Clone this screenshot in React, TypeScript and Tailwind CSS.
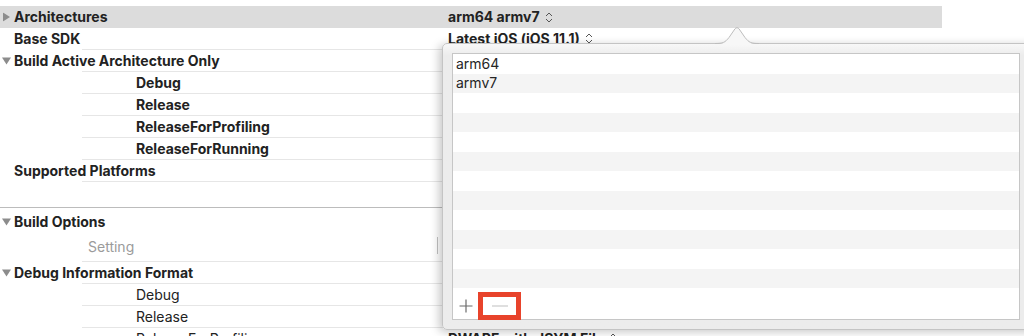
import React from 'react';

const font = { fontFamily: 'Inter, "Liberation Sans", sans-serif' };

function Updown() {
  return (
    <svg width="8" height="11" viewBox="0 0 8 11" className="ml-[5px] inline-block">
      <path d="M1 4 L4 1 L7 4 M1 7 L4 10 L7 7" fill="none" stroke="#555" strokeWidth="1" />
    </svg>
  );
}

function Triangle({ open }: { open: boolean }) {
  return (
    <svg width="9" height="9" viewBox="0 0 9 9" className="absolute left-[2px] top-1/2 -translate-y-1/2">
      {open ? <path d="M0 1 L9 1 L4.5 8 Z" fill="#8c8c8c" /> : <path d="M1 0 L8 4.5 L1 9 Z" fill="#8c8c8c" />}
    </svg>
  );
}

type Row = {
  label: string;
  indent?: boolean;
  bold?: boolean;
  tri?: 'open' | 'closed';
  value?: string;
  h?: string;
  line?: boolean;
};

function SettingRow({ row }: { row: Row }) {
  return (
    <div>
      <div className={`relative flex items-center ${row.h ?? 'h-[21px]'}`}>
        {row.tri && <Triangle open={row.tri === 'open'} />}
        <div className={`${row.indent ? 'pl-[136px]' : 'pl-[14px]'} w-[448px] shrink-0 ${row.bold === false ? 'font-normal' : 'font-bold'} text-[#222]`}>
          {row.label}
        </div>
        {row.value && (
          <div className="flex items-center font-bold text-[#222]">
            {row.value}
            <Updown />
          </div>
        )}
      </div>
      {row.line !== false && <div className="ml-[82px] h-px bg-[#e6e6e6]" />}
    </div>
  );
}

// values of the rows under the popover are hidden in the screenshot
const section1: Row[] = [
  { label: 'Base SDK', value: 'Latest iOS (iOS 11.1)' },
  { label: 'Build Active Architecture Only', tri: 'open' },
  { label: 'Debug', indent: true },
  { label: 'Release', indent: true },
  { label: 'ReleaseForProfiling', indent: true },
  { label: 'ReleaseForRunning', indent: true },
  { label: 'Supported Platforms' },
];

const section2: Row[] = [
  { label: 'Debug Information Format', tri: 'open' },
  { label: 'Debug', indent: true, bold: false },
  { label: 'Release', indent: true, bold: false },
  { label: 'ReleaseForProfiling', indent: true, bold: false, value: 'DWARF with dSYM File' },
];

function ArchPopover() {
  const stripes = Array.from({ length: 12 });
  return (
    <div className="absolute left-[442px] top-[27px] w-[600px]">
      <svg width="44" height="18" viewBox="0 0 44 18" className="absolute left-[273px] top-0 z-10">
        <path d="M0 17 C8 17 10 16 14 11 L20 2 C21 0.5 23 0.5 24 2 L30 11 C34 16 36 17 44 17 L44 18 L0 18 Z" fill="#f7f7f7" />
        <path d="M0 16.5 C8 16.5 10 15.5 14 10.5 L20 1.8 C21 0.3 23 0.3 24 1.8 L30 10.5 C34 15.5 36 16.5 44 16.5" fill="none" stroke="#bdbdbd" strokeWidth="1" />
      </svg>
      <div className="mt-[16px] h-[287px] rounded-[5px] border border-[#c4c4c4] bg-gradient-to-b from-[#f8f8f8] from-0% to-[#ececec] to-[4%] p-[9px] shadow-[-3px_2px_10px_rgba(0,0,0,0.22)]">
        <div className="flex h-[267px] w-[568px] flex-col border border-[#c6c6c6] bg-white">
          <div className="flex flex-col">
            {stripes.map((_, i) => (
              <div key={i} className={`flex h-[19.5px] items-center pl-[3px] text-[#262626] ${i % 2 ? 'bg-[#f4f4f4]' : 'bg-white'}`}>
                {i === 0 ? 'arm64' : i === 1 ? 'armv7' : ''}
              </div>
            ))}
          </div>
          <div className="relative flex flex-1 items-end pl-[5px]">
            <svg width="16" height="16" viewBox="0 0 16 16" className="mb-[5px]">
              <path d="M8 1.5 V14.5 M1.5 8 H14.5" stroke="#6b6b6b" strokeWidth="1.2" />
            </svg>
            <div className="mb-[-1px] ml-[4px] flex h-[28px] w-[43px] items-center justify-center border-[5px] border-[#e8432b]">
              <svg width="18" height="4" viewBox="0 0 18 4">
                <path d="M1 2 H17" stroke="#c9c9c9" strokeWidth="1.2" />
              </svg>
            </div>
          </div>
        </div>
      </div>
    </div>
  );
}

export default function App() {
  return (
    <div className="relative h-[336px] w-[1024px] overflow-hidden bg-white text-[14px] leading-none" style={font}>
      <div className="h-[6px]" />
      <div className="relative flex h-[22px] w-[942px] items-center bg-[#dcdcdc]">
        <Triangle open={false} />
        <div className="w-[448px] shrink-0 pl-[14px] font-bold text-[#222]">Architectures</div>
        <div className="flex items-center font-bold text-[#222]">
          arm64 armv7
          <Updown />
        </div>
      </div>
      {section1.map((r, i) => (
        <SettingRow key={i} row={r} />
      ))}
      <div className="h-[25px]" />
      <div className="h-px w-[442px] bg-[#bcbcbc]" />
      <div className="h-[3px]" />
      <SettingRow row={{ label: 'Build Options', tri: 'open', line: false }} />
      <div className="relative flex h-[29px] items-center">
        <div className="pl-[88px] text-[#9b9b9b]">Setting</div>
        <div className="absolute left-[437px] top-[5px] h-[17px] w-px bg-[#c2c2c2]" />
      </div>
      <div className="ml-[82px] h-px bg-[#e6e6e6]" />
      {section2.map((r, i) => (
        <SettingRow key={i} row={r} />
      ))}
      <ArchPopover />
    </div>
  );
}
